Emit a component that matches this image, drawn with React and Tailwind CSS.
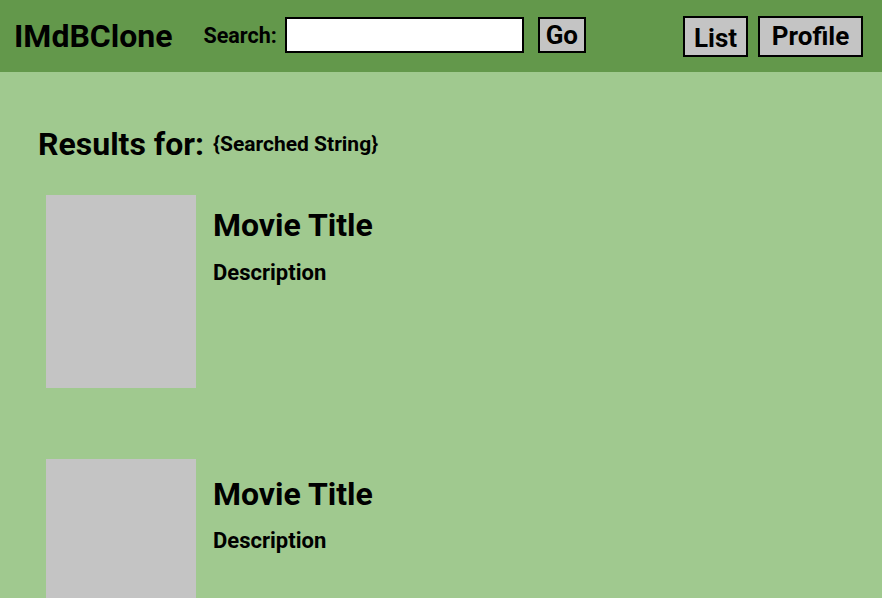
export default function App() {
  const font = { fontFamily: "Roboto, 'Liberation Sans', sans-serif" };
  return (
    <div className="w-[882px] h-[598px] overflow-hidden bg-[#a0c98f] text-black" style={font}>
      <header className="h-[72px] bg-[#63984b] flex items-center pl-[14px] pr-[19px]">
        <div className="text-[32px] font-bold leading-none">IMdBClone</div>
        <label className="ml-[31px] text-[21.5px] font-bold leading-none">Search:</label>
        <input className="ml-[8px] w-[239px] h-[36px] -mt-[2px] bg-white border-2 border-black outline-none" />
        <button className="ml-[14px] w-[48px] h-[36px] -mt-[2px] bg-[#c4c4c4] border-2 border-black text-[26px] font-bold leading-none">Go</button>
        <div className="ml-auto flex gap-[10px] items-center">
          <button className="w-[65px] h-[41px] bg-[#c4c4c4] border-2 border-black text-[26px] font-bold leading-none pt-[4px]">List</button>
          <button className="w-[105px] h-[41px] bg-[#c4c4c4] border-2 border-black text-[26px] font-bold leading-none">Profile</button>
        </div>
      </header>
      <main className="pl-[38px] pt-[56px]">
        <div className="flex items-start">
          <h1 className="text-[32px] font-bold leading-none">Results for:</h1>
          <span className="ml-[9px] mt-[6px] text-[21px] font-bold leading-none">{"{Searched String}"}</span>
        </div>
        <div className="mt-[35px] pl-[8px] flex flex-col gap-[71px]">
          <div className="flex">
            <div className="w-[150px] h-[193px] bg-[#c4c4c4] shrink-0" />
            <div className="ml-[17px] pt-[14px]">
              <h2 className="text-[32px] font-bold leading-none">Movie Title</h2>
              <p className="mt-[21px] text-[22px] font-bold leading-none">Description</p>
            </div>
          </div>
          <div className="flex">
            <div className="w-[150px] h-[193px] bg-[#c4c4c4] shrink-0" />
            <div className="ml-[17px] pt-[19px]">
              <h2 className="text-[32px] font-bold leading-none">Movie Title</h2>
              <p className="mt-[20px] text-[22px] font-bold leading-none">Description</p>
            </div>
          </div>
        </div>
      </main>
    </div>
  );
}
